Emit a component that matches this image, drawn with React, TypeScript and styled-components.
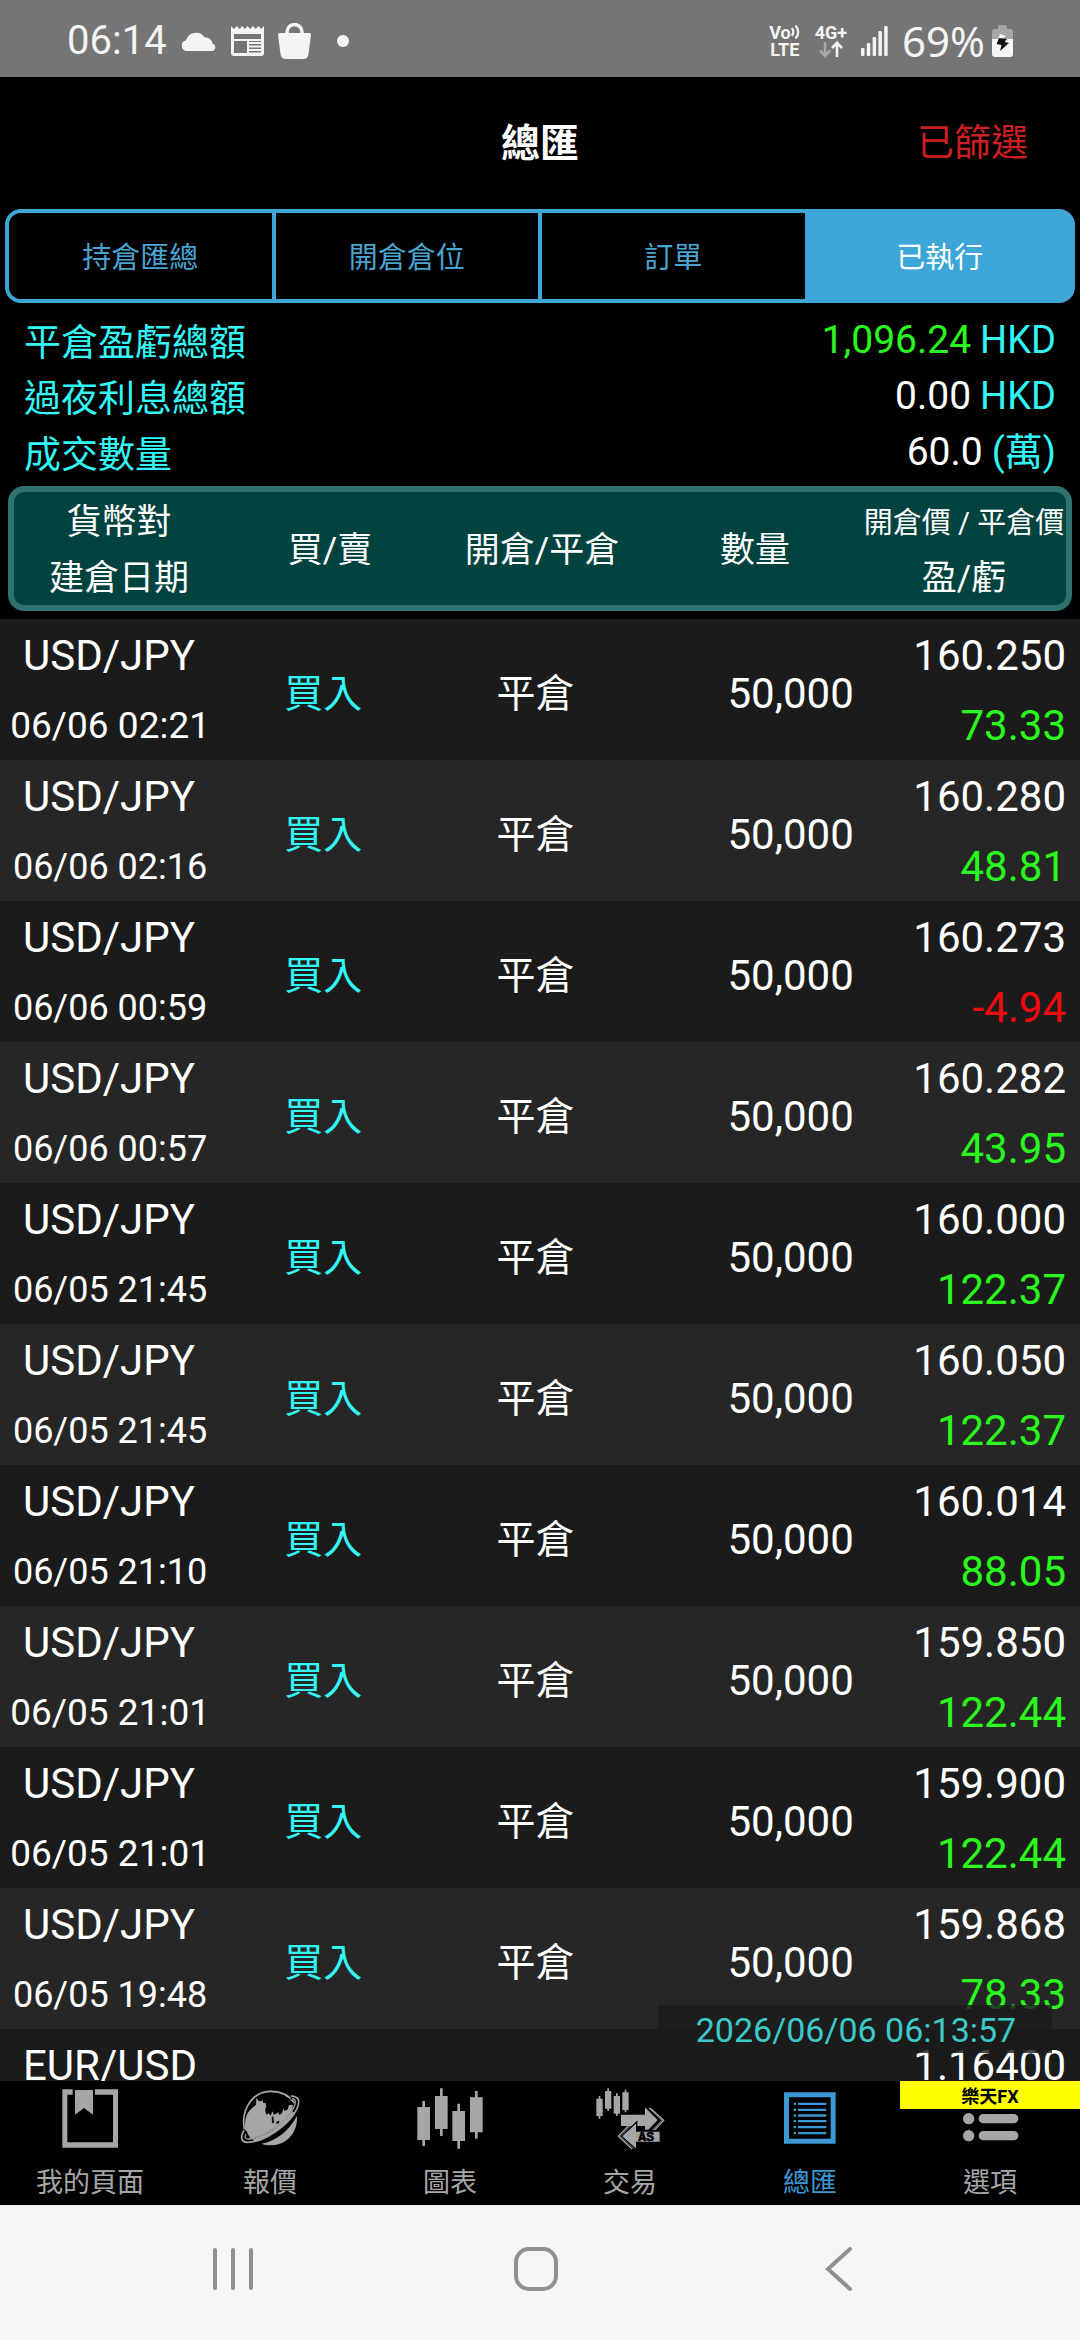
import React from 'react';
import styled, { createGlobalStyle } from 'styled-components';

const sans = `Roboto, "Noto Sans CJK TC", "Noto Sans", sans-serif`;

const colors = {
  accent: '#3ea6d6',
  cyan: '#33f7f7',
  green: '#2af81e',
  red: '#ee0a0e',
  icon: '#a6a6a6',
  navActive: '#3c98d3',
};

const GlobalStyle = createGlobalStyle`
  *, *::before, *::after { box-sizing: border-box; }
  body { margin: 0; background: #000; font-family: ${sans}; color: #fff; }
  button { font: inherit; color: inherit; background: none; border: 0; padding: 0; cursor: pointer; }
  svg { display: block; flex: none; }
`;

const Screen = styled.div`
  display: flex;
  flex-direction: column;
  height: 100vh;
`;

/* ---------- system status bar ---------- */

const StatusBar = styled.div`
  display: flex;
  justify-content: space-between;
  align-items: center;
  height: 77px;
  padding: 4px 67px 0;
  background: #757575;
  color: #f4f4f4;
`;

const StatusGroup = styled.div`
  display: flex;
  align-items: center;
  gap: 14px;
`;

const StatusText = styled.span`
  font-size: 40px;
  line-height: 48px;
`;

const BatteryText = styled(StatusText)`
  font-family: "Noto Sans", sans-serif;
  font-size: 42px;
`;

const Dot = styled.span`
  width: 12px;
  height: 12px;
  margin-left: 12px;
  border-radius: 50%;
  background: currentColor;
`;

const Stack = styled.span`
  display: flex;
  flex-direction: column;
  align-items: center;
  font-size: 18px;
  font-weight: 700;
  line-height: 17px;
`;

const StackLine = styled.span`
  display: flex;
  align-items: center;
`;

const BatteryGroup = styled.span`
  display: flex;
  align-items: center;
  gap: 7px;
`;

/* ---------- header ---------- */

const Header = styled.header`
  display: grid;
  grid-template-columns: 1fr auto 1fr;
  align-items: center;
  height: 132px;
  padding: 0 52px 6px;
`;

const Title = styled.h1`
  grid-column: 2;
  margin: 0;
  font-size: 39px;
  font-weight: 700;
`;

const FilterButton = styled.button`
  justify-self: end;
  font-size: 37px;
  color: #cb1f24;
`;

const Tabs = styled.div`
  display: flex;
  height: 94px;
  margin: 0 5px;
  border: 4px solid ${colors.accent};
  border-radius: 16px;
  background: linear-gradient(to right, transparent 50%, ${colors.accent} 50%);
  overflow: hidden;
`;

const Tab = styled.button<{ $active?: boolean }>`
  flex: 1;
  padding-bottom: 2px;
  font-size: 29px;
  color: ${(p) => (p.$active ? '#fff' : '#49a4d2')};
  background: ${(p) => (p.$active ? colors.accent : '#000')};

  &:first-child {
    border-radius: 12px 0 0 12px;
  }

  & + & {
    border-left: 4px solid ${colors.accent};
  }
`;

/* ---------- totals ---------- */

const Summary = styled.dl`
  margin: 0;
  padding: 11px 24px 4px;
`;

const SummaryRow = styled.div`
  display: flex;
  justify-content: space-between;
  height: 56px;
`;

const SummaryLabel = styled.dt`
  font-size: 37px;
  line-height: 60px;
  color: ${colors.cyan};
`;

const SummaryValue = styled.dd<{ $tone?: string }>`
  display: flex;
  gap: 9px;
  margin: 0;
  font-size: 39px;
  line-height: 52px;
  color: ${(p) => p.$tone ?? '#fff'};
`;

const Unit = styled.span`
  font-size: 38px;
  color: ${colors.cyan};
`;

/* ---------- executed trades ---------- */

const ListArea = styled.main`
  position: relative;
  display: flex;
  flex: 1;
  min-height: 0;
`;

const Table = styled.table`
  display: flex;
  flex-direction: column;
  flex: 1;
  min-width: 0;
`;

const TableHead = styled.thead`
  display: block;
  padding: 0 8px 8px;
`;

const HeadRow = styled.tr`
  display: grid;
  grid-template-columns: 105fr 106fr 106fr 107fr 102fr;
  align-items: center;
  height: 125px;
  padding-top: 3px;
  border: 6px solid #2e7272;
  border-radius: 16px;
  background: #02423f;
`;

const HeadCell = styled.th`
  padding: 0;
  font-size: 35px;
  font-weight: 400;
  line-height: 56px;
  white-space: nowrap;
`;

const HeadLine = styled.div<{ $small?: boolean }>`
  font-size: ${(p) => (p.$small ? 29 : 35)}px;
`;

const TableBody = styled.tbody`
  display: block;
  flex: 1;
  min-height: 0;
  overflow-y: auto;
  scrollbar-width: none;
`;

const TradeRow = styled.tr`
  display: grid;
  grid-template-columns: 220fr 206fr 218fr 209fr 212fr;
  align-items: center;
  height: 141px;
  padding-right: 14px;
  background: #1b1b1b;

  &:nth-child(even) {
    background: #262626;
  }
`;

const Cell = styled.td<{ $tone?: string }>`
  padding: 0;
  font-size: 39px;
  text-align: center;
  color: ${(p) => p.$tone ?? '#fff'};
`;

const AmountCell = styled.td`
  padding: 6px 0 0;
  font-size: 42px;
  text-align: right;
`;

const PairCell = styled.td`
  padding: 2px 0 0;
  font-size: 42px;
  line-height: 70px;
  white-space: nowrap;
`;

const Pair = styled.div`
  padding-left: 23px;
`;

const TradeDate = styled.div<{ $wide?: boolean }>`
  font-size: ${(p) => (p.$wide ? 37 : 36)}px;
  text-align: center;
`;

const PriceCell = styled(PairCell)`
  text-align: right;
`;

const Profit = styled.div<{ $loss: boolean }>`
  color: ${(p) => (p.$loss ? colors.red : colors.green)};
`;

const Clock = styled.time`
  position: absolute;
  right: 28px;
  bottom: 28px;
  width: 394px;
  height: 48px;
  padding: 1px 0 0 2px;
  font-size: 34px;
  line-height: 48px;
  text-align: center;
  color: #3cc9c9;
  background: rgba(27, 27, 27, 0.8);
`;

/* ---------- bottom navigation ---------- */

const Nav = styled.nav`
  position: relative;
  display: flex;
  height: 124px;
  background: #000;
`;

const NavItem = styled.a<{ $active?: boolean }>`
  display: flex;
  flex: 1;
  flex-direction: column;
  align-items: center;
  gap: 13px;
  padding-top: 5px;
  font-size: 27px;
  line-height: 40px;
  text-decoration: none;
  color: ${(p) => (p.$active ? colors.navActive : colors.icon)};
`;

const Badge = styled.div`
  position: absolute;
  top: 0;
  right: 0;
  width: calc(100% / 6);
  height: 28px;
  padding-top: 2px;
  font-size: 18px;
  font-weight: 700;
  line-height: 28px;
  text-align: center;
  color: #000;
  background: #ff0;
`;

const SystemNav = styled.div`
  display: flex;
  height: 135px;
  padding: 0 90px 0 82px;
  background: #f6f6f9;
`;

const SystemButton = styled.button`
  display: flex;
  flex: 1;
  align-items: center;
  justify-content: center;
  padding-bottom: 7px;
`;

/* ---------- icons ---------- */

const CloudIcon = () => (
  <svg width="36" height="20" viewBox="0 0 36 20" fill="currentColor">
    <path d="M5.500 20A5.500 5.500 0 0 1 5 9.200A10.500 10.500 0 0 1 23.500 6.200A7.500 7.500 0 0 1 31.500 12.500A4 4 0 0 1 32 20Z" />
  </svg>
);

const NewsIcon = () => (
  <svg width="33" height="30" viewBox="0 0 33 30">
    <path
      fill="currentColor"
      d="M0 0L3 3L5.700 0L8.500 3L11.200 0L14 3L16.500 0L19.200 3L22 0L24.700 3L27.500 0L30 3L33 0V27A3 3 0 0 1 30 30H3A3 3 0 0 1 0 27Z"
    />
    <g fill="#757575">
      <path d="M3 8H30V13H3Z" />
      <path d="M3 15H16V27H3Z" />
      <path d="M18 15H30V16H18ZM18 18H30V19.500H18ZM18 21.500H30V23H18ZM18 25H30V26.500H18Z" />
    </g>
  </svg>
);

const BagIcon = () => (
  <svg width="33" height="36" viewBox="0 0 33 36">
    <path d="M9 12V9A7.500 7.500 0 0 1 24 9V12" fill="none" stroke="currentColor" strokeWidth="3.500" />
    <path
      fill="currentColor"
      d="M1.500 10H31.500Q33 10 33 12L30.500 31Q30 36 25 36H8Q3 36 2.500 31L0 12Q0 10 1.500 10Z"
    />
  </svg>
);

const WavesIcon = () => (
  <svg width="10" height="16" viewBox="0 0 10 16" fill="none" stroke="currentColor" strokeWidth="2.200">
    <path d="M1 4Q3.500 8 1 12" />
    <path d="M4.500 1.500Q10 8 4.500 14.500" />
  </svg>
);

const DataArrowsIcon = () => (
  <svg width="26" height="17" viewBox="0 0 26 17" fill="none" strokeWidth="2.600">
    <path d="M7 1V15M2 9.500L7 15L12 9.500" stroke="#a9a9a9" />
    <path d="M19 16V2M14 7L19 1.800L24 7" stroke="currentColor" />
  </svg>
);

const SignalIcon = () => (
  <svg width="27" height="30" viewBox="0 0 27 30" fill="currentColor">
    <rect x="0" y="22" width="3.500" height="8" rx="1" />
    <rect x="5.800" y="17" width="3.500" height="13" rx="1" />
    <rect x="11.600" y="11" width="3.500" height="19" rx="1" />
    <rect x="17.400" y="5" width="3.500" height="25" rx="1" />
    <rect x="23.200" y="0" width="3.500" height="30" rx="1" />
  </svg>
);

const BatteryIcon = () => (
  <svg width="21" height="32" viewBox="0 0 21 32">
    <path d="M6 4V2Q6 0 8 0H13Q15 0 15 2V4H18Q21 4 21 7V14H0V7Q0 4 3 4Z" fill="#a6a6a6" />
    <path d="M0 14H21V29Q21 32 18 32H3Q0 32 0 29Z" fill="#f6f6f6" />
    <path d="M8 9L14 11L10 14L5 17Z" fill="#f6f6f6" />
    <path d="M7 13L15 14L12.500 17L17 18L8 26L9.500 20L4.500 19Z" fill="#111" />
  </svg>
);

const NavIcon = ({ box, children }: { box: string; children: React.ReactNode }) => (
  <svg width="80" height="64" viewBox={box} fill="currentColor" aria-hidden="true">
    {children}
  </svg>
);

const BookIcon = () => (
  <NavIcon box="150 318 240 192">
    <path d="M187 328H218V344H202V487H339V344H285V328H354V503H187Z" />
    <path d="M225 330H279V404L252 384L225 404Z" />
  </NavIcon>
);

const GlobeIcon = () => (
  <NavIcon box="690 318 240 192">
    <path
      d="M733 448C722 385 760 334 812 334C842 334 868 346 884 370"
      fill="none"
      stroke="currentColor"
      strokeWidth="5"
    />
    <path d="M735 448C734 420 738 402 752 388L768 374L769 354L776 363L786 364L789 358V368L797 369L799 382L795 388L799 404L806 400L812 407L817 394L822 404L829 401L834 396L838 405L846 400L850 384L853 393L864 388L866 376L878 374L878 392L860 424L800 464L752 476Z" />
    <path d="M815 412L820 408L822 428L816 430ZM829 425L838 422L837 430L829 431Z" fill="#000" />
    <path d="M784 491C830 484 868 450 891 408C894 455 862 496 812 496C802 496 792 494 784 491Z" />
    <path
      d="M736 452C722 468 724 484 742 485C786 486 862 438 888 384C896 366 894 350 872 349"
      fill="none"
      stroke="#000"
      strokeWidth="17"
    />
    <path
      d="M732 450C720 470 724 487 742 487C790 488 866 436 890 388C902 362 896 348 872 348"
      fill="none"
      stroke="currentColor"
      strokeWidth="5"
    />
    <path
      d="M738 462C732 474 738 478 748 477C790 474 850 434 876 392C888 372 890 356 876 356"
      fill="none"
      stroke="currentColor"
      strokeWidth="4"
    />
    <path d="M760 481C800 472 850 440 880 396" fill="none" stroke="currentColor" strokeWidth="7" />
  </NavIcon>
);

const ChartIcon = () => (
  <NavIcon box="150 318 240 192">
    <path d="M172 381H210V480H172ZM187 363H195V498H187Z" />
    <path d="M225 348H263V447H225ZM240 325H248V468H240Z" />
    <path d="M277 393H315V483H277ZM292 371H300V506H292Z" />
    <path d="M330 352H368V457H330ZM345 333H353V476H345Z" />
  </NavIcon>
);

const TradeIcon = () => (
  <NavIcon box="690 318 240 192">
    <path d="M709 356H728V408H709ZM716 348H721V416H716Z" />
    <path d="M735 333H754V386H735ZM742 325H747V393H742Z" />
    <path d="M761 348H780V401H761ZM768 340H773V408H768Z" />
    <path d="M787 337H806V390H787ZM794 329H799V397H794Z" />
    <path d="M783 404H855V382L893 420L865 449H855V438H783Z" />
    <path d="M871 385L911 421L883 451" fill="none" stroke="currentColor" strokeWidth="4" />
    <path d="M860 380L902 421L872 451" fill="none" stroke="#000" strokeWidth="4" />
    <path d="M866 383L906 421L877 451" fill="none" stroke="currentColor" strokeWidth="3" />
    <path d="M830 426L784 469L830 510V487H901V453H830Z" stroke="#000" strokeWidth="4" />
    <path d="M816 427L775 469L816 507" fill="none" stroke="currentColor" strokeWidth="4" />
    <path d="M823 427L781 469L823 507" fill="none" stroke="currentColor" strokeWidth="2" />
    <text x="835" y="483" fontSize="39" fontWeight="700" fontFamily="Liberation Mono, monospace" fill="#000" stroke="#000" strokeWidth="2">
      AS
    </text>
  </NavIcon>
);

const ReportIcon = () => (
  <NavIcon box="390 318 240 192">
    <path fillRule="evenodd" d="M432 337H587V491H432ZM447 352V476H572V352Z" />
    {[368, 386, 403, 420, 438, 456].map((y) => (
      <path key={y} d={`M461 ${y}h7v7h-7zM474 ${y}h85v7h-85z`} />
    ))}
  </NavIcon>
);

const OptionsIcon = () => (
  <NavIcon box="930 318 240 192">
    {[366, 416, 467].map((y) => (
      <g key={y}>
        <circle cx="986" cy={y} r="17" />
        <rect x="1016" y={y - 14} width="119" height="28" rx="14" />
      </g>
    ))}
  </NavIcon>
);

/* ---------- data ---------- */

const tabs = ['持倉匯總', '開倉倉位', '訂單', '已執行'];

const trades = [
  ['USD/JPY', '06/06 02:21', '160.250', '73.33'],
  ['USD/JPY', '06/06 02:16', '160.280', '48.81'],
  ['USD/JPY', '06/06 00:59', '160.273', '-4.94'],
  ['USD/JPY', '06/06 00:57', '160.282', '43.95'],
  ['USD/JPY', '06/05 21:45', '160.000', '122.37'],
  ['USD/JPY', '06/05 21:45', '160.050', '122.37'],
  ['USD/JPY', '06/05 21:10', '160.014', '88.05'],
  ['USD/JPY', '06/05 21:01', '159.850', '122.44'],
  ['USD/JPY', '06/05 21:01', '159.900', '122.44'],
  ['USD/JPY', '06/05 19:48', '159.868', '78.33'],
];

const navItems = [
  { label: '我的頁面', Icon: BookIcon },
  { label: '報價', Icon: GlobeIcon },
  { label: '圖表', Icon: ChartIcon },
  { label: '交易', Icon: TradeIcon },
  { label: '總匯', Icon: ReportIcon, active: true },
  { label: '選項', Icon: OptionsIcon },
];

export default function App() {
  return (
    <Screen>
      <GlobalStyle />
      <StatusBar>
        <StatusGroup>
          <StatusText>06:14</StatusText>
          <CloudIcon />
          <NewsIcon />
          <BagIcon />
          <Dot />
        </StatusGroup>
        <StatusGroup>
          <Stack>
            <StackLine>
              Vo
              <WavesIcon />
            </StackLine>
            <StackLine>LTE</StackLine>
          </Stack>
          <Stack>
            <StackLine>4G+</StackLine>
            <DataArrowsIcon />
          </Stack>
          <SignalIcon />
          <BatteryGroup>
            <BatteryText>69%</BatteryText>
            <BatteryIcon />
          </BatteryGroup>
        </StatusGroup>
      </StatusBar>

      <Header>
        <Title>總匯</Title>
        <FilterButton type="button">已篩選</FilterButton>
      </Header>

      <Tabs role="tablist">
        {tabs.map((label, i) => (
          <Tab key={label} type="button" role="tab" aria-selected={i === 3} $active={i === 3}>
            {label}
          </Tab>
        ))}
      </Tabs>

      <Summary>
        <SummaryRow>
          <SummaryLabel>平倉盈虧總額</SummaryLabel>
          <SummaryValue $tone={colors.green}>
            1,096.24<Unit>HKD</Unit>
          </SummaryValue>
        </SummaryRow>
        <SummaryRow>
          <SummaryLabel>過夜利息總額</SummaryLabel>
          <SummaryValue>
            0.00<Unit>HKD</Unit>
          </SummaryValue>
        </SummaryRow>
        <SummaryRow>
          <SummaryLabel>成交數量</SummaryLabel>
          <SummaryValue>
            60.0<Unit>(萬)</Unit>
          </SummaryValue>
        </SummaryRow>
      </Summary>

      <ListArea>
        <Table>
          <TableHead>
            <HeadRow>
              <HeadCell scope="col">
                <HeadLine>貨幣對</HeadLine>
                <HeadLine>建倉日期</HeadLine>
              </HeadCell>
              <HeadCell scope="col">買/賣</HeadCell>
              <HeadCell scope="col">開倉/平倉</HeadCell>
              <HeadCell scope="col">數量</HeadCell>
              <HeadCell scope="col">
                <HeadLine $small>開倉價 / 平倉價</HeadLine>
                <HeadLine>盈/虧</HeadLine>
              </HeadCell>
            </HeadRow>
          </TableHead>
          <TableBody>
            {trades.map(([pair, date, price, profit], i) => (
              <TradeRow key={i}>
                <PairCell>
                  <Pair>{pair}</Pair>
                  <TradeDate $wide={date.endsWith('1')}>{date}</TradeDate>
                </PairCell>
                <Cell $tone={colors.cyan}>買入</Cell>
                <Cell>平倉</Cell>
                <AmountCell>50,000</AmountCell>
                <PriceCell>
                  <div>{price}</div>
                  <Profit $loss={profit.startsWith('-')}>{profit}</Profit>
                </PriceCell>
              </TradeRow>
            ))}
            <TradeRow>
              <PairCell>
                <Pair>EUR/USD</Pair>
                <TradeDate>&nbsp;</TradeDate>
              </PairCell>
              <Cell />
              <Cell />
              <AmountCell />
              <PriceCell>
                <div>1.16400</div>
                <Profit $loss={false}>&nbsp;</Profit>
              </PriceCell>
            </TradeRow>
          </TableBody>
        </Table>
        <Clock dateTime="2026-06-06T06:13:57">2026/06/06 06:13:57</Clock>
      </ListArea>

      <Nav>
        {navItems.map(({ label, Icon, active }) => (
          <NavItem key={label} href="#" $active={active} aria-current={active ? 'page' : undefined}>
            <Icon />
            {label}
          </NavItem>
        ))}
        <Badge>樂天FX</Badge>
      </Nav>

      <SystemNav>
        <SystemButton type="button" aria-label="最近使用">
          <svg width="40" height="44" viewBox="0 0 40 44" stroke="#909090" strokeWidth="4" strokeLinecap="round">
            <path d="M2 3V41M20 3V41M38 3V41" />
          </svg>
        </SystemButton>
        <SystemButton type="button" aria-label="主畫面">
          <svg width="44" height="44" viewBox="0 0 44 44" fill="none" stroke="#909090" strokeWidth="4">
            <rect x="2" y="2" width="40" height="40" rx="13" />
          </svg>
        </SystemButton>
        <SystemButton type="button" aria-label="返回">
          <svg width="28" height="46" viewBox="0 0 28 46" fill="none" stroke="#909090" strokeWidth="4" strokeLinecap="round">
            <path d="M25 3L3 23L25 43" />
          </svg>
        </SystemButton>
      </SystemNav>
    </Screen>
  );
}
